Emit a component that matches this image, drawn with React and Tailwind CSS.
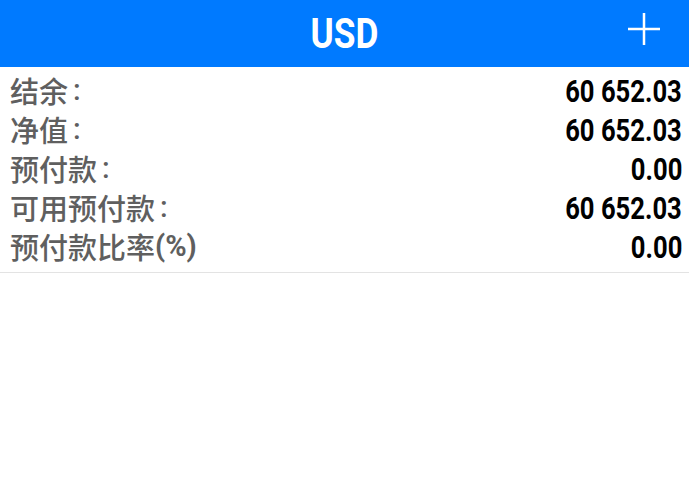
const rows = [
  { label: "结余", suffix: ":", value: "60 652.03" },
  { label: "净值", suffix: ":", value: "60 652.03" },
  { label: "预付款", suffix: ":", value: "0.00" },
  { label: "可用预付款", suffix: ":", value: "60 652.03" },
  { label: "预付款比率", suffix: "(%)", value: "0.00" },
];

const roboto = { fontFamily: '"Roboto", "Liberation Sans", sans-serif' };

export default function App() {
  return (
    <div className="w-[689px] h-[487px] bg-white">
      <div className="relative h-[67px] bg-[#007aff] flex items-center justify-center">
        <span
          className="inline-block text-white font-bold text-[42px] leading-none scale-x-[0.84]"
          style={roboto}
        >
          USD
        </span>
        <button className="absolute right-[28px] top-[12px] w-[34px] h-[34px] flex items-center justify-center">
          <svg width="34" height="34" viewBox="0 0 34 34">
            <path d="M17 1v32M1 17h32" stroke="white" strokeWidth="2.5" fill="none" />
          </svg>
        </button>
      </div>
      <div className="border-b border-[#e3e3e3] pb-[6px] pt-[4px]">
        {rows.map((r) => (
          <div key={r.label} className="flex items-center justify-between h-[39px] pl-[10px] pr-[7px]">
            <span className="flex items-center text-[#5f5f5f] text-[29px] leading-none">
              <span
                className="font-medium"
                style={{ fontFamily: '"Noto Sans CJK SC", "Noto Sans", sans-serif' }}
              >
                {r.label}
              </span>
              {r.suffix === ":" ? (
                <span className="ml-[5px] font-medium" style={roboto}>:</span>
              ) : (
                <span className="font-bold" style={roboto}>
                  {r.suffix}
                </span>
              )}
            </span>
            <span
              className="inline-block text-black font-bold text-[32px] leading-none scale-x-[0.8] origin-right"
              style={roboto}
            >
              {r.value}
            </span>
          </div>
        ))}
      </div>
    </div>
  );
}
